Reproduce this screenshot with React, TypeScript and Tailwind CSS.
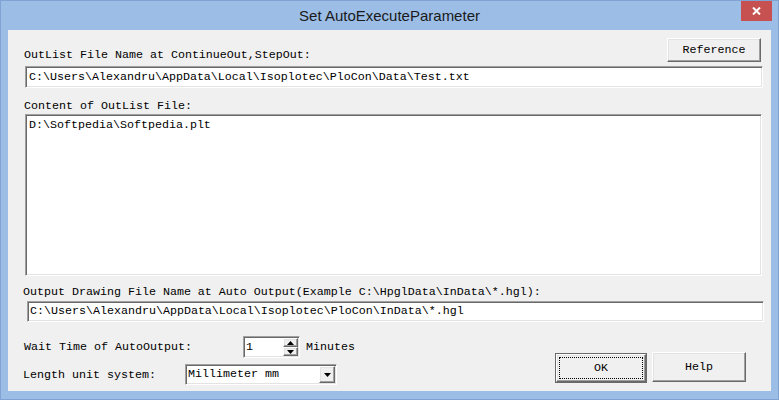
import type { ReactNode } from 'react'

const mono = "font-['Liberation_Mono','Courier_New',monospace] text-[11.67px] leading-[13px] text-black"

function Sunken({ className = '', children }: { className?: string; children?: ReactNode }) {
  return (
    <div
      className={`bg-white border border-t-[#a0a0a0] border-l-[#a0a0a0] border-b-white border-r-white shadow-[inset_1px_1px_0_#696969,inset_-1px_-1px_0_#e3e3e3] ${className}`}
    >
      {children}
    </div>
  )
}

function Raised({ className = '', children }: { className?: string; children?: ReactNode }) {
  return (
    <div
      className={`bg-[#f0f0f0] border border-t-white border-l-white border-b-[#696969] border-r-[#696969] shadow-[inset_-1px_-1px_0_#a0a0a0,inset_1px_1px_0_#e3e3e3] flex items-center justify-center ${className}`}
    >
      {children}
    </div>
  )
}

function Arrow({ up = false }: { up?: boolean }) {
  return (
    <svg width="7" height="4" viewBox="0 0 7 4">
      <path d={up ? 'M0 4 L3.5 0 L7 4 Z' : 'M0 0 L7 0 L3.5 4 Z'} fill="#000" />
    </svg>
  )
}

export default function App() {
  return (
    <div className="w-[779px] h-[400px] bg-[#9bbde6] border border-[#7fa3d3] flex flex-col">
      {/* Title bar */}
      <div className="relative h-[29px] flex items-center justify-center">
        <span className="font-['Liberation_Sans',Arial,sans-serif] text-[15px] text-[#1a1a1a] mt-[1px]">
          Set AutoExecuteParameter
        </span>
        <div className="absolute top-0 right-[6px] w-[31px] h-[20px] bg-[#c75050] flex items-center justify-center">
          <svg width="9" height="8" viewBox="0 0 9 8">
            <path d="M1 0.5 L8 7.5 M8 0.5 L1 7.5" stroke="#fff" strokeWidth="2" />
          </svg>
        </div>
      </div>

      {/* Client area */}
      <div className={`mx-[7px] h-[361px] bg-[#f0f0f0] flex flex-col pl-[16px] pr-[8px] ${mono}`}>
        <div className="mt-[8px] h-[24px] flex items-end justify-between">
          <span className="mb-[0px]">OutList File Name at ContinueOut,StepOut:</span>
          <Raised className="w-[94px] h-[24px] mr-[2px]">Reference</Raised>
        </div>

        <Sunken className="mt-[4px] ml-[1px] h-[22px] flex items-center pl-[3px]">
          C:\Users\Alexandru\AppData\Local\Isoplotec\PloCon\Data\Test.txt
        </Sunken>

        <span className="mt-[12px]">Content of OutList File:</span>

        <Sunken className="mt-[1px] ml-[1px] mr-[1px] h-[162px] pl-[3px] pt-[4px]">
          D:\Softpedia\Softpedia.plt
        </Sunken>

        <span className="mt-[10px] -ml-[1px]">
          Output Drawing File Name at Auto Output(Example C:\HpglData\InData\*.hgl):
        </span>

        <Sunken className="mt-[2px] ml-[3px] -mr-[1px] h-[21px] flex items-center pl-[2px]">
          C:\Users\Alexandru\AppData\Local\Isoplotec\PloCon\InData\*.hgl
        </Sunken>

        <div className="flex">
          <div className="flex flex-col">
            <div className="mt-[14px] h-[22px] flex items-center">
              <span className="w-[219px] mt-[1px]">Wait Time of AutoOutput:</span>
              <Sunken className="w-[57px] h-[22px] flex items-center pl-[2px] pr-[1px]">
                <span className="flex-1">1</span>
                <div className="flex flex-col w-[15px] h-[18px]">
                  <Raised className="h-[9px]">
                    <Arrow up />
                  </Raised>
                  <Raised className="h-[9px]">
                    <Arrow />
                  </Raised>
                </div>
              </Sunken>
              <span className="ml-[6px] mt-[1px]">Minutes</span>
            </div>
            <div className="mt-[6px] h-[21px] flex items-center">
              <span className="w-[162px] -ml-[1px] mt-[1px]">Length unit system:</span>
              <Sunken className="w-[152px] h-[21px] flex items-center pl-[2px] pr-[1px]">
                <span className="flex-1">Millimeter mm</span>
                <Raised className="w-[16px] h-[17px]">
                  <Arrow />
                </Raised>
              </Sunken>
            </div>
          </div>

          <div className="ml-auto mr-[17px] mt-[30px] flex items-start gap-[5px]">
            <div className="w-[92px] h-[30px] border border-[#6a6a6a] mt-[1px]">
              <Raised className="w-full h-full">
                <div className="w-[84px] h-[22px] border border-dotted border-black flex items-center justify-center">
                  OK
                </div>
              </Raised>
            </div>
            <Raised className="w-[94px] h-[30px]">Help</Raised>
          </div>
        </div>
      </div>
    </div>
  )
}
